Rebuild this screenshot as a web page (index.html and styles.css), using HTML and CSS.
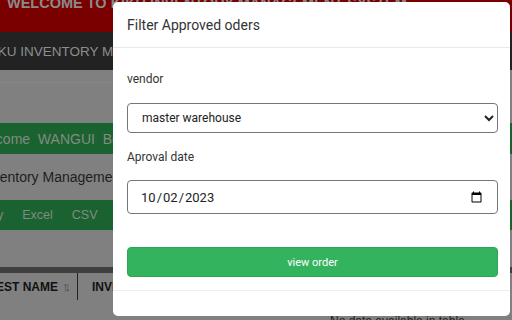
FILE: index.html
```html
<!DOCTYPE html>
<html>
<head>
<meta charset="utf-8">
<link rel="stylesheet" href="styles.css">
</head>
<body>
<div class="page">
  <div class="topbar"><span class="welcome">WELCOME TO KIKU INVENTORY MANAGEMENT SYSTEM</span></div>
  <div class="navbar"><span class="brand">KIKU INVENTORY MANAGEMENT</span></div>
  <div class="spacer"><div class="rule"></div></div>
  <div class="greetbar"><span class="greet">Welcome&nbsp; WANGUI&nbsp; Be</span></div>
  <div class="titleband"><span class="pagetitle">Inventory Management</span></div>
  <div class="exportbar"><span class="exp">Copy</span><span class="exp">Excel</span><span class="exp">CSV</span></div>
  <div class="gap"></div>
  <div class="tabletop"></div>
  <div class="thead">
    <div class="th first">REQUEST NAME <span class="sort"><span class="up">↑</span><span class="down">↓</span></span></div>
    <div class="th">INVENTORY</div>
  </div>
  <div class="nodata">No data available in table</div>
</div>

<div class="modal">
  <div class="modal-header">Filter Approved oders</div>
  <div class="modal-body">
    <label class="lbl">vendor</label>
    <select class="ctrl sel"><option>master warehouse</option></select>
    <label class="lbl">Aproval date</label>
    <input class="ctrl date" type="date" value="2023-10-02">
    <button class="btn">view order</button>
  </div>
  <div class="modal-footer"></div>
</div>
</body>
</html>
```

FILE: styles.css
```css
html, body { margin: 0; padding: 0; }
body {
  width: 512px; height: 320px; overflow: hidden;
  background: #808080;
  font-family: "Liberation Sans", Arial, sans-serif;
  position: relative;
}
.page { width: 512px; }
.topbar {
  height: 32px; background: #7a0000; overflow: hidden; white-space: nowrap;
}
.welcome {
  display: block; margin-top: -7px; margin-left: 7px;
  font-size: 14.5px; font-weight: bold; color: #8a8a8a; line-height: 20px;
}
.navbar {
  height: 38px; background: #222222; overflow: hidden; white-space: nowrap;
  display: flex; align-items: center;
}
.brand { font-size: 13.5px; color: #8e8e8e; margin-left: -15px; }
.spacer { height: 53px; box-sizing: border-box; padding-top: 12px; }
.rule { height: 1px; background: #878787; }
.greetbar {
  height: 31px; background: #1a6330; white-space: nowrap; overflow: hidden;
  display: flex; align-items: center;
}
.greet { font-size: 14px; color: #828a82; margin-left: -28px; }
.titleband {
  height: 46px; display: flex; align-items: center; white-space: nowrap; overflow: hidden;
}
.pagetitle { font-size: 14px; color: #1e1e1e; margin-left: -19px; }
.exportbar {
  height: 30px; background: #1a6330; display: flex; align-items: center; gap: 19px;
  white-space: nowrap; overflow: hidden; margin-left: -26px;
}
.exp { font-size: 12.5px; color: #828a82; }
.gap { height: 37px; }
.tabletop { height: 6px; background: #3f3f3f; }
.thead { height: 27px; display: flex; white-space: nowrap; overflow: hidden; }
.th {
  font-size: 12px; font-weight: bold; color: #111; display: flex; align-items: center;
  padding-left: 14px;
}
.th.first { margin-left: -40px; border-right: 1px solid #222; justify-content: flex-end; padding-right: 6px; box-sizing: border-box; width: 118px; }
.sort { margin-left: 4px; font-weight: normal; font-size: 13px; letter-spacing: -4px; padding-right: 4px; }
.up { color: #2f4f70; }
.down { color: #4a4a4a; }
.nodata { font-size: 12px; color: #222; margin: 14px 0 0 330px; white-space: nowrap; }

.modal {
  position: absolute; left: 113px; top: 2px; width: 397px; height: 314px;
  background: #fff; border-radius: 5px; overflow: hidden;
  font-family: Roboto, "Noto Sans", sans-serif;
  display: flex; flex-direction: column;
}
.modal-header {
  height: 46px; box-sizing: border-box; padding: 0 14px;
  display: flex; align-items: center;
  font-size: 14px; color: #333; border-bottom: 1px solid #e6eaf0;
}
.modal-body {
  padding: 21px 12px 13px 14px; display: flex; flex-direction: column;
  border-bottom: 1px solid #eceff2;
}
.lbl { font-size: 12px; color: #333; line-height: 20px; margin-bottom: 14px; }
.ctrl {
  box-sizing: border-box; width: 100%; border: 1px solid #767676; border-radius: 4px;
  font-family: Roboto, "Noto Sans", sans-serif; font-size: 12px; color: #222;
  background: #fff; margin: 0 0 14px 0;
}
.sel { height: 30px; padding-left: 10px; }
.date { height: 34px; padding: 0 12px 0 12px; margin-bottom: 33px; font-size: 13px; margin-top: -1px; }
.btn {
  height: 30px; border: 1px solid #2ba653; border-radius: 4px; background: #33b35e;
  color: #fff; font-family: Roboto, "Noto Sans", sans-serif; font-size: 11px;
  padding: 0;
}
```
